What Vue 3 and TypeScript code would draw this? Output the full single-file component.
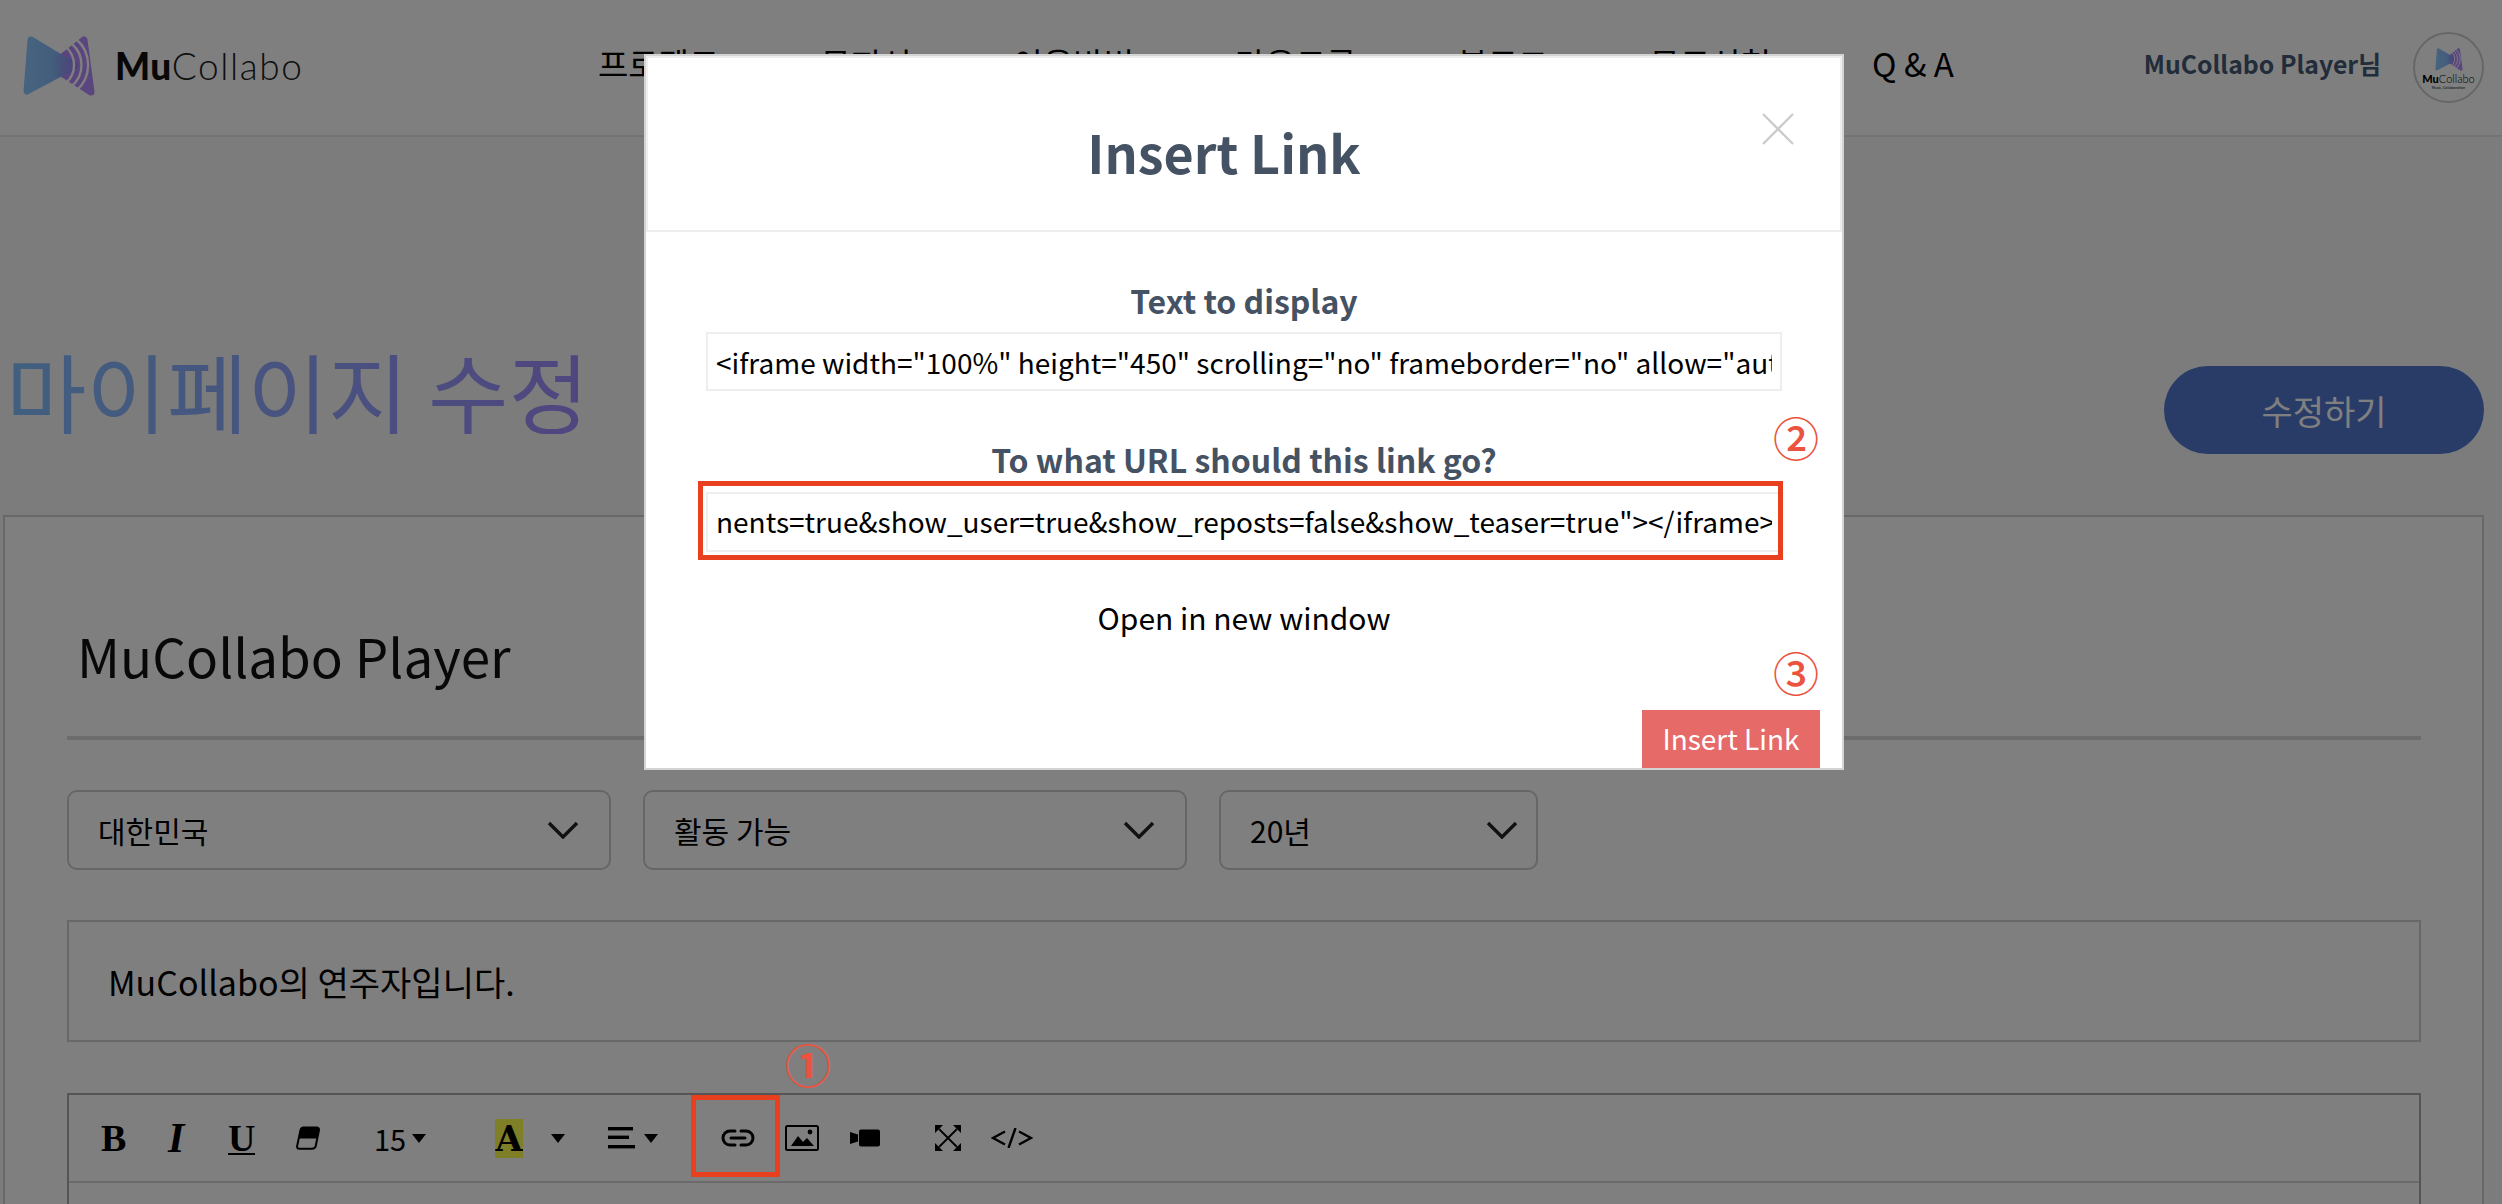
<template>
  <div class="page">
    <header class="topbar">
      <div class="brand">
        <svg class="brand-mark" viewBox="0 0 72 60">
          <defs>
            <linearGradient id="lg-blue" x1="0" y1="0" x2="1" y2="0">
              <stop offset="0" stop-color="#8cc6ff" />
              <stop offset="0.6" stop-color="#86bcf8" />
              <stop offset="1" stop-color="#8a80f0" />
            </linearGradient>
            <linearGradient id="lg-over" x1="0" y1="0" x2="1" y2="0">
              <stop offset="0" stop-color="#7f9cf0" stop-opacity="0" />
              <stop offset="1" stop-color="#b28cff" />
            </linearGradient>
            <g id="mark">
              <path d="M61 4 L68 56 L28 30 Z" fill="#b48aff" stroke="#b48aff" stroke-width="7" stroke-linejoin="round" />
              <path d="M8 4 L51 30 L4 55 Z" fill="url(#lg-blue)" stroke="url(#lg-blue)" stroke-width="7" stroke-linejoin="round" />
              <path d="M28 17 L54 30 L38 40 L28 42 Z" fill="url(#lg-over)" />
              <g fill="none" stroke="#fff" stroke-width="2.4">
                <path d="M44 12 A24 24 0 0 1 44 46" />
                <path d="M49 8 A28 28 0 0 1 49 50" />
                <path d="M53 3 A34 34 0 0 1 53 55" />
              </g>
            </g>
          </defs>
          <use href="#mark" />
        </svg>
        <div class="brand-name"><b>Mu</b><span>Collabo</span></div>
      </div>

      <nav class="menu">
        <a v-for="item in menu" :key="item">{{ item }}</a>
      </nav>

      <div class="user">
        <span class="user-name">MuCollabo Player님</span>
        <div class="avatar">
          <svg class="avatar-mark" viewBox="0 0 72 60"><use href="#mark" /></svg>
          <div class="avatar-name"><b>Mu</b>Collabo</div>
          <div class="avatar-sub">Music, Collaboration</div>
        </div>
      </div>
    </header>

    <main class="content">
      <div class="title-row">
        <h1 class="page-title">마이페이지 수정</h1>
        <button class="save-btn">수정하기</button>
      </div>

      <section class="card">
        <div class="player-name">MuCollabo Player</div>

        <div class="selects">
          <div v-for="s in selects" :key="s.label" class="select" :class="s.cls">
            <span>{{ s.label }}</span>
            <svg width="32" height="18" viewBox="0 0 32 18">
              <polyline points="2,2 16,16 30,2" fill="none" stroke="#222" stroke-width="3.4" />
            </svg>
          </div>
        </div>

        <div class="bio">MuCollabo의 연주자입니다.</div>

        <div class="editor">
          <div class="toolbar">
            <span class="t-b">B</span>
            <span class="t-i">I</span>
            <span class="t-u">U</span>
            <svg class="t-eraser" width="24" height="24" viewBox="0 0 24 24">
              <path d="M7.5 1.5 H20.5 Q23.5 1.5 22.9 4.5 L19.8 19.8 Q19.1 22.8 16 22.8 H3.6 Q0.6 22.8 1.2 19.8 L4.4 4.5 Q5 1.5 7.5 1.5 Z" fill="none" stroke="#000" stroke-width="2" />
              <path d="M7.5 1.5 H20.5 Q23.5 1.5 22.9 4.5 L21.4 12.5 H2.6 L4.4 4.5 Q5 1.5 7.5 1.5 Z" fill="#000" />
            </svg>
            <span class="t-size">15</span>
            <i class="caret c1"></i>
            <span class="t-color">A</span>
            <i class="caret c2"></i>
            <svg class="t-align" width="28" height="22" viewBox="0 0 28 22">
              <rect x="0" y="0" width="25" height="3.4" />
              <rect x="0" y="8.6" width="21" height="3.4" />
              <rect x="0" y="18" width="27" height="3.4" />
            </svg>
            <i class="caret c3"></i>
            <svg class="t-link" width="34" height="18" viewBox="0 0 34 18">
              <g fill="none" stroke="#000" stroke-width="3" stroke-linecap="round">
                <path d="M14 2 H9 A7 7 0 0 0 9 16 H14" />
                <path d="M20 2 H25 A7 7 0 0 1 25 16 H20" />
                <path d="M10 9 H24" />
              </g>
            </svg>
            <svg class="t-image" width="34" height="26" viewBox="0 0 34 26">
              <rect x="1" y="1" width="32" height="24" rx="1.5" fill="none" stroke="#000" stroke-width="2" />
              <path d="M6 21 L13 11 L18 17 L22 13 L29 21 Z" fill="#000" />
              <circle cx="25" cy="7" r="2.4" fill="#000" />
            </svg>
            <svg class="t-video" width="30" height="18" viewBox="0 0 30 18">
              <path d="M0 3 L8 5.5 V12.5 L0 15 Z" fill="#000" />
              <rect x="9" y="0.5" width="21" height="17" rx="2" fill="#000" />
            </svg>
            <svg class="t-full" width="26" height="26" viewBox="0 0 26 26">
              <path d="M4 4 L22 22 M22 4 L4 22" stroke="#000" stroke-width="1.8" fill="none" />
              <path d="M0 0 H8 L0 8 Z M26 0 V8 L18 0 Z M0 26 V18 L8 26 Z M26 26 H18 L26 18 Z" fill="#000" />
            </svg>
            <svg class="t-code" width="42" height="20" viewBox="0 0 42 20">
              <g fill="none" stroke="#000" stroke-width="2.4">
                <polyline points="14,3.5 2,10 14,16.5" />
                <polyline points="28,3.5 40,10 28,16.5" />
                <line x1="24.5" y1="0" x2="17.5" y2="20" />
              </g>
            </svg>
          </div>
        </div>
      </section>
    </main>

    <div class="overlay"></div>

    <div class="modal">
      <div class="modal-head">
        <h2>Insert Link</h2>
        <svg class="close" width="32" height="32" viewBox="0 0 32 32">
          <path d="M1 1 L31 31 M31 1 L1 31" stroke="#ccc" stroke-width="2.4" fill="none" />
        </svg>
      </div>
      <div class="modal-body">
        <label class="first">Text to display</label>
        <input class="field f1" type="text" readonly :value="displayText" />
        <label class="second">To what URL should this link go?</label>
        <input class="field f2" type="text" readonly :value="urlText" />
        <div class="new-window">Open in new window</div>
        <div class="modal-foot">
          <button class="insert-btn">Insert Link</button>
        </div>
      </div>
    </div>

    <!-- annotations drawn on top of the screenshot -->
    <div class="mark-box box-url"></div>
    <div class="mark-box box-link"></div>
    <span class="num n1">①</span>
    <span class="num n2">②</span>
    <span class="num n3">③</span>
  </div>
</template>

<script setup lang="ts">
const menu = ['프로젝트', '뮤지션', '이용방법', '라운드룸', '블로그', '무료신청', 'Q & A']

const selects = [
  { label: '대한민국', cls: 'wide' },
  { label: '활동 가능', cls: 'wide' },
  { label: '20년', cls: 'narrow' }
]

const displayText = '<iframe width="100%" height="450" scrolling="no" frameborder="no" allow="autoplay" src="https://w.soundcloud.com/player/"'
const urlText = 'nents=true&show_user=true&show_reposts=false&show_teaser=true"></iframe>'
</script>

<style>
html, body {
  margin: 0;
  overflow: hidden;
}
</style>

<style scoped>
.page {
  position: relative;
  height: 1204px;
  overflow: hidden;
  background: #f8f8f8;
  font-family: "Noto Sans CJK KR", "Noto Sans", sans-serif;
  color: #000;
}
.topbar {
  display: flex;
  align-items: center;
  height: 135px;
  padding: 0 18px 0 23px;
  background: #fff;
  border-bottom: 2px solid #e8e8e8;
}
.brand {
  display: flex;
  align-items: center;
  width: 279px;
  margin-top: -4px;
}
.brand-mark {
  width: 72px;
  height: 60px;
  flex: none;
}
.brand-name {
  margin-left: 20px;
  font-family: Lato, sans-serif;
  font-size: 37px;
  font-weight: 300;
  color: #222;
  line-height: 1;
  white-space: nowrap;
}
.brand-name b {
  font-weight: 900;
  color: #111;
  letter-spacing: 0.5px;
}
.brand-name span {
  letter-spacing: 1.6px;
}
.menu {
  display: flex;
  gap: 101px;
  margin-left: 296px;
  font-size: 33px;
  line-height: 40px;
  margin-top: -10px;
  white-space: nowrap;
}
.user {
  display: flex;
  align-items: center;
  margin-left: auto;
}
.user-name {
  font-size: 24.8px;
  font-weight: 700;
  color: #445874;
  margin-right: 32px;
  margin-top: -10px;
}
.avatar {
  width: 71px;
  height: 71px;
  box-sizing: border-box;
  border: 2px solid #ccc;
  border-radius: 50%;
  display: flex;
  flex-direction: column;
  align-items: center;
  background: #fff;
}
.avatar-mark {
  width: 28px;
  height: 23px;
  margin-top: 14px;
}
.avatar-name {
  font-family: Lato, sans-serif;
  font-size: 11px;
  font-weight: 300;
  line-height: 12px;
  margin-top: 2px;
}
.avatar-name b {
  font-weight: 900;
}
.avatar-sub {
  font-size: 3.5px;
  line-height: 5px;
}

.content {
  display: flex;
  flex-direction: column;
}
.title-row {
  display: flex;
  align-items: center;
  justify-content: space-between;
  height: 88px;
  margin: 229px 18px 61px 6px;
}
.page-title {
  margin: 0 0 40px;
  font-size: 87.5px;
  font-weight: 400;
  line-height: 88px;
  background: linear-gradient(90deg, #82c0ff, #a08cff);
  -webkit-background-clip: text;
  background-clip: text;
  color: transparent;
}
.save-btn {
  width: 320px;
  height: 88px;
  border: none;
  border-radius: 44px;
  background: #5278d0;
  color: #fff;
  font-family: inherit;
  font-size: 34px;
}
.card {
  box-sizing: border-box;
  width: 2481px;
  margin-left: 3px;
  padding: 0 61px 0 62px;
  border: 2px solid #d0d0d0;
  background: #fff;
  height: 800px;
}
.player-name {
  padding: 103px 0 46px 10px;
  font-size: 53px;
  line-height: 70px;
  border-bottom: 4px solid #d8d8d8;
  color: #111;
}
.selects {
  display: flex;
  gap: 32px;
  margin-top: 50px;
}
.select {
  box-sizing: border-box;
  display: flex;
  align-items: center;
  justify-content: space-between;
  height: 80px;
  padding: 0 30px 0 29px;
  border: 2px solid #ccc;
  border-radius: 10px;
  font-size: 30px;
}
.select.wide {
  width: 544px;
}
.select.narrow {
  width: 319px;
  padding-right: 18px;
}
.bio {
  box-sizing: border-box;
  display: flex;
  align-items: center;
  height: 122px;
  margin-top: 50px;
  padding-left: 39px;
  border: 2px solid #d0d0d0;
  font-size: 34px;
}
.editor {
  margin-top: 51px;
  height: 300px;
  border: 2px solid #aaa;
}
.toolbar {
  display: flex;
  align-items: center;
  height: 86px;
  padding-left: 32px;
  border-bottom: 2px solid #d6d6d6;
}
.t-b, .t-i, .t-u {
  font-family: "Liberation Serif", serif;
  font-size: 38px;
  font-weight: 700;
  line-height: 1;
}
.t-b {
  width: 26px;
}
.t-i {
  margin-left: 41px;
  font-style: italic;
  font-size: 42px;
  width: 18px;
}
.t-u {
  margin-left: 42px;
  width: 27px;
  border-bottom: 2px solid #000;
  line-height: 30px;
  height: 30px;
  margin-top: 2px;
}
.t-eraser {
  margin-left: 41px;
}
.t-size {
  margin-left: 54px;
  font-size: 29px;
  line-height: 1;
  width: 30px;
}
.caret {
  display: block;
  width: 0;
  height: 0;
  border-left: 7px solid transparent;
  border-right: 7px solid transparent;
  border-top: 9px solid #000;
}
.c1 {
  margin-left: 8px;
}
.t-color {
  margin-left: 69px;
  width: 28px;
  height: 39px;
  background: #ffff50;
  font-family: "DejaVu Serif", serif;
  font-size: 35px;
  font-weight: 700;
  line-height: 39px;
  text-align: center;
  margin-top: 1px;
  overflow: hidden;
}
.c2 {
  margin-left: 28px;
}
.t-align {
  margin-left: 43px;
}
.c3 {
  margin-left: 8px;
}
.t-link {
  margin-left: 63px;
}
.t-image {
  margin-left: 30px;
}
.t-video {
  margin-left: 31px;
}
.t-full {
  margin-left: 55px;
}
.t-code {
  margin-left: 30px;
}

.overlay {
  position: absolute;
  inset: 0;
  background: rgba(0, 0, 0, 0.5);
}
.modal {
  position: absolute;
  left: 644px;
  top: 54px;
  width: 1200px;
  height: 716px;
  box-sizing: border-box;
  display: flex;
  flex-direction: column;
  background: #fff;
  border: 2px solid #d4d4d4;
}
.modal-head {
  position: relative;
  box-sizing: border-box;
  flex: none;
  height: 176px;
  padding: 16px 40px 0 0;
  display: flex;
  align-items: center;
  justify-content: center;
  border: 2px solid #eee;
}
.modal-head h2 {
  margin: 0;
  font-size: 52px;
  line-height: 70px;
  font-weight: 700;
  color: #455263;
}
.close {
  position: absolute;
  top: 55px;
  right: 46px;
}
.modal-body {
  flex: 1;
  display: flex;
  flex-direction: column;
  align-items: center;
  padding: 0 60px;
}
.modal-body label {
  font-size: 32px;
  font-weight: 700;
  line-height: 44px;
  color: #455263;
}
.first {
  margin-top: 46px;
}
.second {
  margin-top: 46px;
}
.field {
  box-sizing: border-box;
  width: 1076px;
  padding: 0 8px 3px;
  border: 2px solid #eee;
  outline: none;
  background: #fff;
  color: #000;
  font-family: inherit;
  font-size: 28px;
}
.f1 {
  height: 59px;
  margin-top: 10px;
  padding-bottom: 0;
}
.f2 {
  height: 60px;
  margin-top: 11px;
  text-align: right;
}
.new-window {
  margin-top: 45px;
  font-size: 30px;
  line-height: 40px;
}
.modal-foot {
  align-self: stretch;
  display: flex;
  justify-content: flex-end;
  margin: 73px -38px 0 0;
}
.insert-btn {
  width: 178px;
  height: 58px;
  border: none;
  background: #e66a67;
  color: #fff;
  font-family: inherit;
  font-size: 28px;
  padding: 0 0 3px;
}
.mark-box {
  position: absolute;
  box-sizing: border-box;
  border: 5px solid #e8401f;
}
.box-url {
  left: 698px;
  top: 481px;
  width: 1085px;
  height: 79px;
}
.box-link {
  left: 691px;
  top: 1095px;
  width: 89px;
  height: 82px;
}
.num {
  position: absolute;
  width: 60px;
  margin-left: -30px;
  text-align: center;
  font-size: 46px;
  font-weight: 500;
  line-height: 60px;
  margin-top: -33px;
  color: #eb5340;
}
.n1 {
  left: 808px;
  top: 1066px;
  font-weight: 700;
}
.n2 {
  left: 1796px;
  top: 439px;
}
.n3 {
  left: 1796px;
  top: 674px;
}
</style>
